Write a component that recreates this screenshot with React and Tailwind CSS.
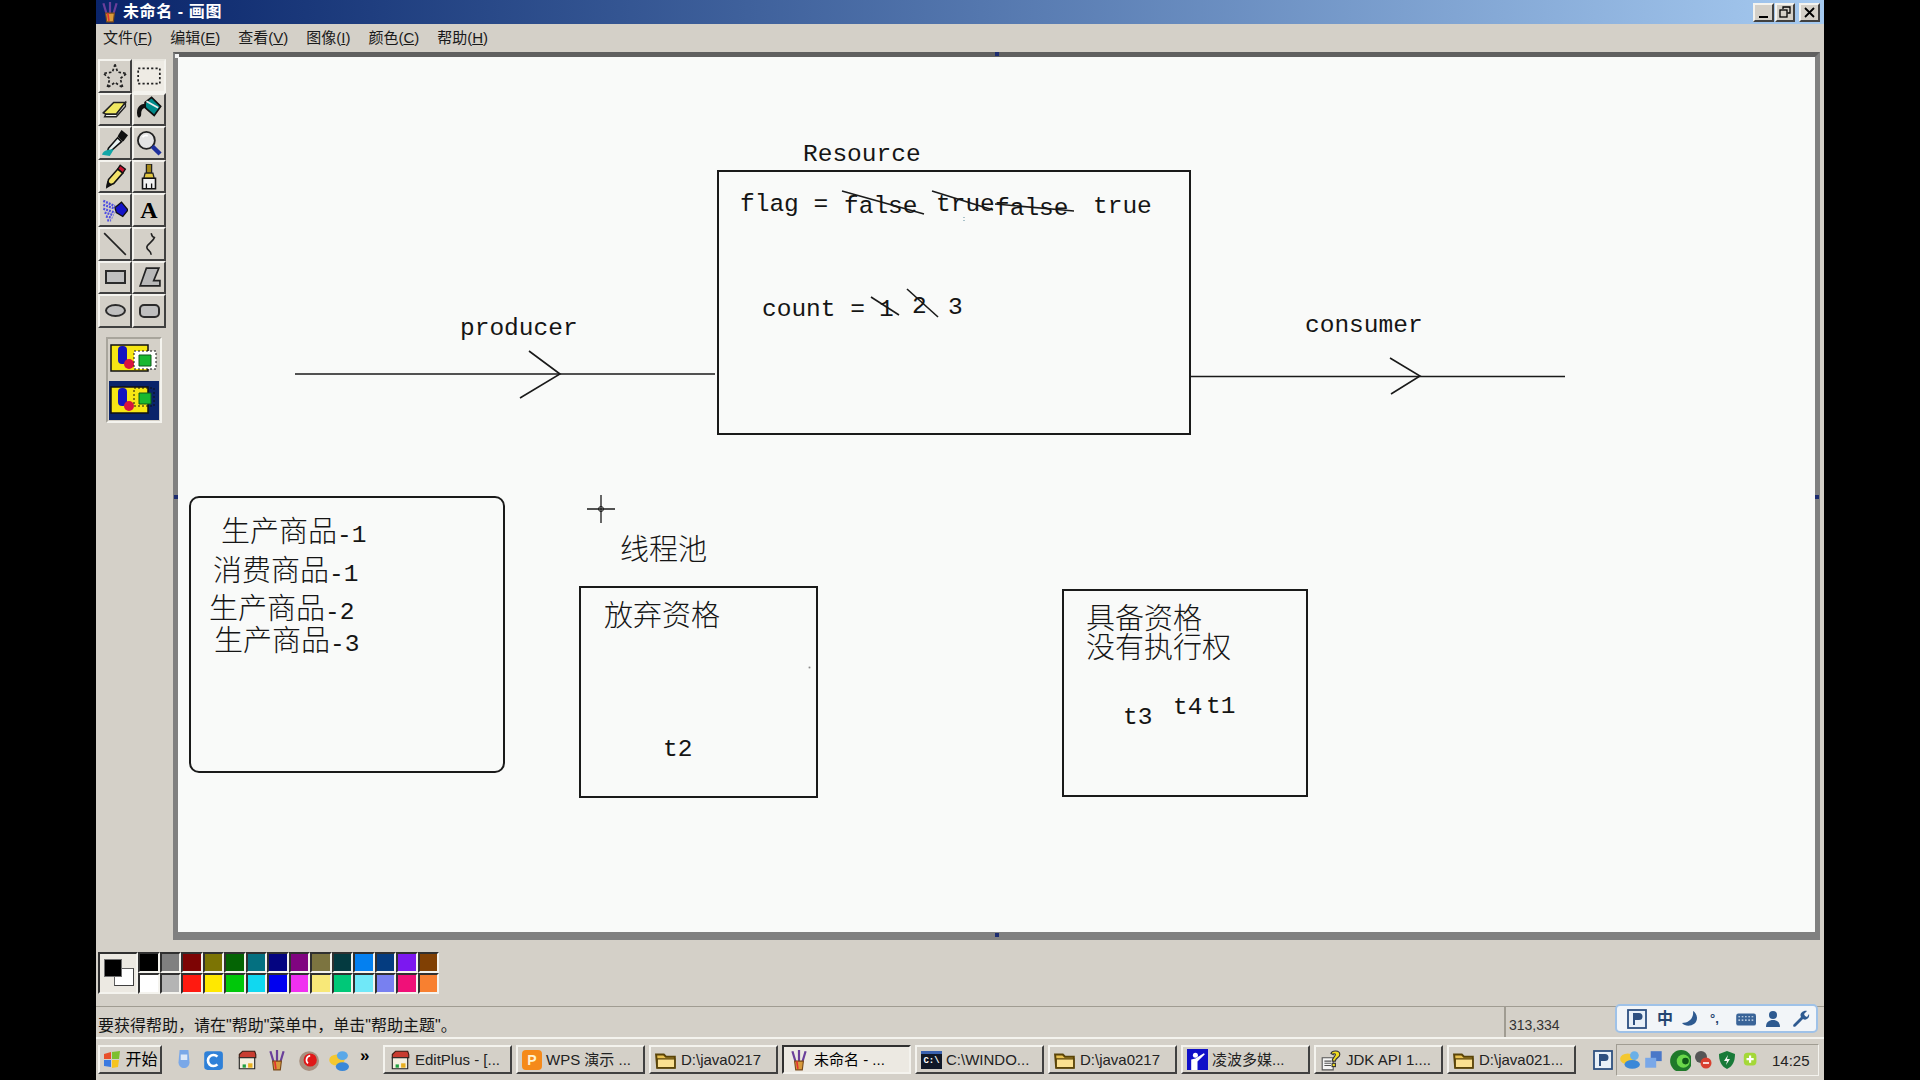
import React from "react";

const raised = "border-2 border-t-[#f4f3ee] border-l-[#f4f3ee] border-r-[#404040] border-b-[#404040]";
const sunken = "border-2 border-t-[#303030] border-l-[#303030] border-r-[#f4f3ee] border-b-[#f4f3ee]";
const ui = "font-['Liberation_Sans','Noto_Sans_CJK_SC',sans-serif]";
const mono = "font-['Liberation_Mono','Noto_Sans_CJK_SC',monospace]";
const latin = `absolute ${mono} text-[24.5px] leading-[28px] text-[#151515] whitespace-pre`;
const cjk = "absolute font-['Noto_Sans_CJK_SC',sans-serif] font-light text-[29px] leading-[26px] text-[#151515] whitespace-pre";
const digits = `${mono} text-[24.5px] leading-[20px]`;

const S = ({ children, size = 20, vb = "0 0 20 20", className = "" }) => (
  <svg width={size} height={size} viewBox={vb} className={className} fill="none">{children}</svg>
);
const T = ({ children }) => <S size={26}>{children}</S>;

const tools = [
  <T><path d="M10 1l2 6 7 1-5 4 2 7-6-4-6 4 2-7-5-4 7-1z" stroke="#222" strokeWidth="1.300" strokeDasharray="2 1.500" /></T>,
  <S size={26} vb="0 0 24 24"><rect x="2" y="5" width="20" height="14" stroke="#222" strokeWidth="1.600" strokeDasharray="2 2" /></S>,
  <T><path d="M1 13l8-8h9l-7 9H3z" fill="#f0e860" stroke="#222" strokeWidth="1.200" /><path d="M2 16l1-2h8l7-9v3l-7 8H3z" fill="#f4f4f4" stroke="#222" strokeWidth="1.100" /></T>,
  <T><path d="M7 5l5-4 7 7-5 7-7-6z" fill="#008a8a" stroke="#111" strokeWidth="1.300" /><path d="M8 4l9 5" stroke="#eee" strokeWidth="1.400" /><path d="M7 6C3 6 0 9 1 15c1 3 3 1 3-1 0-3 1-5 4-5" fill="#111" /></T>,
  <T><path d="M15 0l5 4-3 4-1 1-4-4 1-2z" fill="#111" /><path d="M12 6l3 3-8 7-3 1 1-3z" fill="#e8f2f2" stroke="#111" strokeWidth="1.200" /><path d="M0 19c1-4 6-4 9-4l-3 5z" fill="#12a6a6" /></T>,
  <T><circle cx="8" cy="8" r="6.500" fill="#e4e4e4" stroke="#222" strokeWidth="1.400" /><path d="M12.500 12.500l6 6" stroke="#1d2f9c" strokeWidth="3.400" /><path d="M5 5.500q2-2 4-1" stroke="#fff" strokeWidth="1.400" /></T>,
  <T><path d="M14 1l4 3-2 3-4-3z" fill="#c8102e" stroke="#111" /><path d="M12 4l4 3-7 8-5 2 1-5z" fill="#f3e36a" stroke="#111" strokeWidth="1.200" /><path d="M3 19l1-6 4 3z" fill="#111" /></T>,
  <T><path d="M8 0h4v7H8z" fill="#a68a18" stroke="#222" /><path d="M7 7h6l1 4H6z" fill="#e4c840" stroke="#222" /><path d="M5 11h10v8H5z" fill="#f2f2f2" stroke="#111" strokeWidth="1.200" /><path d="M8 15v4M12 15v4" stroke="#111" /></T>,
  <T><path d="M10 8l5-4 5 6-4 5-5-3z" fill="#1414c8" stroke="#111" /><path d="M1 3l9 4M1 6l9 3M1 9l9 3M2 12l7 2M3 15l5 1M4 18l3 0" stroke="#5050e0" strokeWidth="1.800" strokeDasharray="1.500 0.800" /></T>,
  <span className="font-['Liberation_Serif',serif] font-bold text-[24px] leading-none text-black">A</span>,
  <S size={26} vb="0 0 24 24"><path d="M2 2l20 20" stroke="#222" strokeWidth="1.500" /></S>,
  <S size={26} vb="0 0 24 24"><path d="M14 2c1 3 1 3 3 4-1 4-7 6-7 9 0 3 4 3 4 7" stroke="#222" strokeWidth="1.500" /></S>,
  <span className="block w-[21px] h-[14px] border-2 border-[#2b2b2b] bg-[#bfbfbf]" />,
  <S size={25} vb="0 0 24 24"><path d="M9 3h12l-5 12h6v5H3z" fill="#b8b8b8" stroke="#222" strokeWidth="1.600" /></S>,
  <span className="block w-[21px] h-[13px] rounded-[50%] border-2 border-[#2b2b2b] bg-[#bfbfbf]" />,
  <span className="block w-[21px] h-[14px] rounded-[5px] border-2 border-[#2b2b2b] bg-[#bfbfbf]" />,
];

const OpaqueIcon = () => (
  <svg width="48" height="30" viewBox="0 0 48 30" fill="none">
    <rect x="1" y="2" width="37" height="26" fill="#f6e614" stroke="#111" strokeWidth="1.500" />
    <rect x="8" y="3" width="9" height="18" rx="4" fill="#1414c0" />
    <circle cx="19" cy="21" r="5" fill="#d81440" />
    <rect x="24" y="8" width="22" height="18" fill="#fff" stroke="#111" strokeDasharray="2 2" />
    <path d="M29 12h12v11H29z" fill="#18b830" stroke="#0a5a18" />
  </svg>
);
const TransIcon = () => (
  <svg width="48" height="30" viewBox="0 0 48 30" fill="none">
    <rect x="1" y="2" width="37" height="26" fill="#f6e614" stroke="#111" strokeWidth="1.500" />
    <rect x="8" y="3" width="9" height="18" rx="4" fill="#1414c0" />
    <circle cx="19" cy="21" r="5" fill="#d81440" />
    <rect x="24" y="3" width="20" height="18" stroke="#111" strokeDasharray="2 2" />
    <path d="M29 8h12v11H29z" fill="#18b830" stroke="#0a5a18" />
  </svg>
);

const palette = [
  ["#000000", "#808080", "#7d0404", "#7c7404", "#046404", "#047080", "#040480", "#800480", "#7c7440", "#043a40", "#0480f0", "#043c80", "#7c18f0", "#804004"],
  ["#ffffff", "#b4b4b4", "#ff1a10", "#ffe800", "#00c80a", "#10d8f0", "#0000f0", "#f030f0", "#f8e878", "#00c878", "#70e8f8", "#7880f0", "#f01078", "#f88030"],
];

const PaintIcon = ({ size = 22 }) => (
  <S size={size}>
    <path d="M4 2l3 10M16 2l-3 10M10 1v11" stroke="#6a3f9a" strokeWidth="2" />
    <path d="M6 11h8l-1 8H7z" fill="#d89a3a" stroke="#7a4a1a" />
    <path d="M8 11l1 7" stroke="#e23030" strokeWidth="1.500" />
  </S>
);
const Folder = () => (
  <S size={22}>
    <path d="M1 5h7l2 2h8v10H2z" fill="#e8c050" stroke="#5a4408" strokeWidth="1.800" />
    <path d="M2 9h16v8H2z" fill="#fbe090" stroke="#5a4408" strokeWidth="1.300" />
  </S>
);
const EditPlus = () => (
  <S size={22}>
    <path d="M3 5l3-3h11l1 3v3H3z" fill="#c83c30" stroke="#3a1a10" />
    <path d="M3 8h14v10H3z" fill="#f4f0e0" stroke="#222" />
    <path d="M6 14h3v3H6z" fill="#20a040" />
    <path d="M11 13h4v4h-4z" fill="#e8b020" />
  </S>
);

const taskButtons = [
  { label: "EditPlus - [...", icon: <EditPlus /> },
  { label: "WPS 演示 ...", icon: <span className="flex w-[20px] h-[20px] shrink-0 items-center justify-center rounded-[4px] bg-[#f58a1a] text-[14px] font-bold leading-none text-[#fff2d0]">P</span> },
  { label: "D:\\java0217", icon: <Folder /> },
  { label: "未命名 - ...", icon: <PaintIcon />, active: true },
  { label: "C:\\WINDO...", icon: <span className="flex w-[21px] h-[18px] shrink-0 items-center justify-center bg-[#101828] border-t-[3px] border-[#3a62b0] font-['Liberation_Mono',monospace] text-[9px] font-bold leading-none text-white">C:\</span> },
  { label: "D:\\java0217", icon: <Folder /> },
  { label: "凌波多媒...", icon: (
    <S size={21}><rect x="0" y="0" width="20" height="20" fill="#1010c8" /><circle cx="8" cy="6" r="2.400" fill="#fff" /><path d="M4 20V10l4-1 8-5 1 1-7 7v8z" fill="#fff" /></S>
  ) },
  { label: "JDK API 1....", icon: (
    <S size={22}><path d="M2 8h10v11H2z" fill="#f4f4f4" stroke="#555" /><path d="M4 11h6M4 13h6M4 15h6" stroke="#555" /><path d="M10 4c1-3 8-3 8 1 0 3-4 3-4 6h-3c0-3 3-4 3-6 0-1-2-1-2 0z" fill="#f2dc20" stroke="#333" /><rect x="11" y="13" width="3" height="3" fill="#f2dc20" stroke="#333" /></S>
  ) },
  { label: "D:\\java021...", icon: <Folder /> },
];

const CanvasDrawing = () => (
  <div className="relative flex-1 bg-[#f9faf9] overflow-hidden">
    <div className="absolute left-[539px] top-[113px] w-[474px] h-[265px] border-2 border-[#1a1a1a]" />
    <div className="absolute left-[11px] top-[439px] w-[316px] h-[277px] rounded-[10px] border-2 border-[#1a1a1a]" />
    <div className="absolute left-[401px] top-[529px] w-[239px] h-[212px] border-2 border-[#1a1a1a]" />
    <div className="absolute left-[884px] top-[532px] w-[246px] h-[208px] border-2 border-[#1a1a1a]" />

    <svg className="absolute left-0 top-0" width="1637" height="875" viewBox="178 57 1637 875" fill="none" stroke="#1a1a1a" strokeWidth="1.600">
      <path d="M295 374H715" />
      <path d="M529 351L560 374L520 398" />
      <path d="M1190 376.500H1565" />
      <path d="M1390 358L1420 376L1391 394" />
      <path d="M842 191L924 214" />
      <path d="M932 191L993 210" />
      <path d="M995 204L1074 211" />
      <path d="M871 297L899 315" />
      <path d="M907 289L938 317" />
      <path d="M601 495V523M587 509H615" strokeWidth="1.300" />
      <circle cx="601" cy="509" r="2.500" strokeWidth="1" />
      <rect x="809" y="667" width="1" height="1" stroke="#666" strokeWidth="0.600" />
      <path d="M964 217v1M964 220v1" stroke="#5a8a9a" strokeWidth="1" />
    </svg>

    <span className={`${latin} left-[625px] top-[84px]`}>Resource</span>
    <span className={`${latin} left-[562px] top-[134px]`}>flag =</span>
    <span className={`${latin} left-[666px] top-[136px]`}>false</span>
    <span className={`${latin} left-[758px] top-[134px]`}>true</span>
    <span className={`${latin} left-[817px] top-[138px]`}>false</span>
    <span className={`${latin} left-[915px] top-[136px]`}>true</span>
    <span className={`${latin} left-[584px] top-[239px]`}>count =</span>
    <span className={`${latin} left-[701px] top-[239px]`}>1</span>
    <span className={`${latin} left-[734px] top-[236px]`}>2</span>
    <span className={`${latin} left-[770px] top-[237px]`}>3</span>
    <span className={`${latin} left-[282px] top-[258px]`}>producer</span>
    <span className={`${latin} left-[1127px] top-[255px]`}>consumer</span>

    <span className={`${cjk} left-[43px] top-[459px]`}>生产商品<span className={digits}>-1</span></span>
    <span className={`${cjk} left-[35px] top-[498px]`}>消费商品<span className={digits}>-1</span></span>
    <span className={`${cjk} left-[31px] top-[536px]`}>生产商品<span className={digits}>-2</span></span>
    <span className={`${cjk} left-[36px] top-[568px]`}>生产商品<span className={digits}>-3</span></span>
    <span className={`${cjk} left-[442px] top-[477px]`}>线程池</span>
    <span className={`${cjk} left-[426px] top-[543px]`}>放弃资格</span>
    <span className={`${latin} left-[485px] top-[679px]`}>t2</span>
    <span className={`${cjk} left-[908px] top-[546px]`}>具备资格</span>
    <span className={`${cjk} left-[908px] top-[575px]`}>没有执行权</span>
    <span className={`${latin} left-[945px] top-[647px]`}>t3</span>
    <span className={`${latin} left-[995px] top-[637px]`}>t4</span>
    <span className={`${latin} left-[1028px] top-[636px]`}>t1</span>
  </div>
);

const Handle = ({ className }) => <span className={`absolute w-[4px] h-[4px] bg-[#1c2c70] ${className}`} />;

export default function App() {
  return (
    <div className={`w-[1920px] h-[1080px] overflow-hidden bg-black pl-[96px] pr-[96px] ${ui}`}>
      <div className="flex flex-col h-full bg-[#d4d0c8]">
        {/* Title bar */}
        <div className="flex items-center h-[24px] shrink-0 pl-[3px] pr-[4px] bg-gradient-to-r from-[#0a246a] to-[#a6caf0]">
          <PaintIcon />
          <span className="ml-[2px] text-[16px] tracking-[0.6px] font-bold text-white leading-none">未命名 - 画图</span>
          <div className="ml-auto flex items-center gap-[1px]">
            <span className={`flex items-end justify-center w-[21px] h-[19px] pb-[2px] bg-[#d4d0c8] ${raised}`}><span className="block w-[9px] h-[2px] bg-black" /></span>
            <span className={`flex items-center justify-center w-[20px] h-[19px] mr-[3px] bg-[#d4d0c8] ${raised}`}>
              <svg width="12" height="12" viewBox="0 0 12 12" fill="none" stroke="#000" strokeWidth="1.300"><path d="M4 3V1h7v6H8.500" /><rect x="1" y="4" width="7" height="7" /></svg>
            </span>
            <span className={`flex items-center justify-center w-[21px] h-[19px] bg-[#d4d0c8] ${raised}`}>
              <svg width="11" height="11" viewBox="0 0 11 11" stroke="#000" strokeWidth="1.800"><path d="M1 1l9 9M10 1l-9 9" /></svg>
            </span>
          </div>
        </div>

        {/* Menu bar */}
        <div className="flex items-center h-[26px] shrink-0 gap-[18px] pl-[7px] text-[15px] leading-none text-[#1a1a1a]">
          <span>文件(<u>F</u>)</span>
          <span>编辑(<u>E</u>)</span>
          <span>查看(<u>V</u>)</span>
          <span>图像(<u>I</u>)</span>
          <span>颜色(<u>C</u>)</span>
          <span>帮助(<u>H</u>)</span>
        </div>

        {/* Main */}
        <div className="flex flex-1 min-h-0">
          <div className="flex flex-col w-[77px] shrink-0 pt-[9px] pl-[2px]">
            <div className="grid grid-cols-[34px_34px] auto-rows-[33.600px]">
              {tools.map((t, i) => (
                <div key={i} className={`flex items-center justify-center ${i === 1 ? `bg-[#eeebe4] ${sunken}` : raised} border-l-[#e8e6df] border-t-[#e8e6df]`}>
                  {t}
                </div>
              ))}
            </div>
            <div className={`flex flex-col items-center justify-center gap-[4px] w-[56px] h-[86px] mt-[9px] ml-[8px] border-2 border-t-[#a8a59c] border-l-[#a8a59c] border-r-[#f4f3ee] border-b-[#f4f3ee]`}>
              <div className="flex items-center justify-center w-[50px] h-[37px]"><OpaqueIcon /></div>
              <div className="flex items-center justify-center w-[50px] h-[39px] bg-[#0a246a]"><TransIcon /></div>
            </div>
          </div>
          <div className="relative flex flex-1 flex-col mt-[2px] mr-[4px] border-t-[5px] border-l-[5px] border-r-[5px] border-b-[8px] border-t-[#606060] border-l-[#808080] border-r-[#808080] border-b-[#808080]">
            <CanvasDrawing />
            <Handle className="left-[-3px] top-[-3px] bg-[#f4f4f4]" />
            <Handle className="left-[-4px] top-[438px]" />
            <Handle className="left-[817px] top-[-5px]" />
            <Handle className="right-[-4px] top-[438px]" />
            <Handle className="left-[817px] bottom-[-5px]" />
          </div>
        </div>

        {/* Colour box */}
        <div className="flex h-[66px] shrink-0 items-start pt-[12px] pl-[2px]">
          <div className={`relative w-[40px] h-[42px] shrink-0 bg-[#ece9e2] ${sunken}`}>
            <span className="absolute left-[14px] top-[14px] w-[20px] h-[18px] bg-white border border-t-[#606060] border-l-[#606060] border-r-[#404040] border-b-[#404040]" />
            <span className="absolute left-[4px] top-[5px] w-[18px] h-[18px] bg-black border border-[#707070]" />
          </div>
          <div className="grid grid-cols-[repeat(14,21.500px)] auto-rows-[21px]">
            {palette.flat().map((c, i) => (
              <span key={i} style={{ backgroundColor: c }} className={`block ${sunken}`} />
            ))}
          </div>
        </div>

        {/* Status bar */}
        <div className="flex h-[32px] shrink-0 border-t border-t-[#a09c92] border-b border-b-[#f4f3ee]">
          <div className="flex flex-1 items-center pl-[2px] pt-[7px] text-[16px] leading-none text-[#151515]">要获得帮助，请在"帮助"菜单中，单击"帮助主题"。</div>
          <div className="flex items-center w-[320px] shrink-0 pl-[3px] border-l-2 border-l-[#a09c92] text-[14px] leading-none text-[#333] pt-[6px]">313,334</div>
          <div className="absolute left-[1615px] top-[1004px] flex items-center h-[29px] w-[203px] pl-[10px] gap-[7px] rounded-[5px] border-2 border-[#9fc2e8] bg-[#f2f5f8] text-[#25456f]">
            <S size={20}><rect x="1" y="1" width="18" height="18" fill="#e8f0f8" stroke="#2e5080" strokeWidth="1.800" /><path d="M6 4h6a3.500 3.500 0 010 7H8v5H6z" fill="#2e5080" /></S>
            <span className="text-[16px] font-bold leading-none ml-[3px]">中</span>
            <S size={20}><path d="M13 2c1 7-4 12-11 12 4 5 15 3 15-5 0-3-2-6-4-7z" fill="#2e5a90" /></S>
            <span className="text-[13px] font-bold leading-none ml-[3px] w-[17px]">°,</span>
            <S size={22}><rect x="2" y="5" width="18" height="11" rx="2" fill="#3a6498" /><path d="M4 8h14M4 11h14" stroke="#dce8f4" strokeDasharray="1.500 1.500" /></S>
            <S size={20}><circle cx="10" cy="6" r="4" fill="#2e5a90" /><path d="M3 18c0-5 3-7 7-7s7 2 7 7z" fill="#2e5a90" /></S>
            <S size={20}><path d="M17 2l-3 3 1 2 2 1 2-3c1 4-3 7-6 5L6 17c-2 2-4 0-2-2l7-7c-2-3 2-7 6-6z" fill="#2e5a90" /></S>
          </div>
        </div>

        {/* Taskbar */}
        <div className="flex items-start h-[42px] shrink-0 pt-[6px] pl-[2px] border-t border-t-[#f4f3ee]">
          <div className={`flex items-center justify-center gap-[3px] w-[64px] h-[29px] shrink-0 text-[16px] leading-none text-black ${raised}`}>
            <svg width="20" height="20" viewBox="0 0 20 20"><path d="M2 4l7-2v7H2z" fill="#e8502a" /><path d="M10 2l8-1-1 8h-7z" fill="#7cc030" /><path d="M2 10h7v7l-7-1z" fill="#3a7ae0" /><path d="M10 10h7l-1 7-6 1z" fill="#f6c420" /></svg>
            开始
          </div>
          <div className="flex items-center w-[221px] h-[29px] shrink-0 pl-[11px] text-[0px]">
            <span className="w-[29px] shrink-0"><S size={22}><path d="M6 1h8l1 11c0 7-10 7-10 0z" fill="#7aa8e8" /><path d="M7 5h6v5H7z" fill="#dce8f8" /></S></span>
            <span className="w-[34px] shrink-0"><S size={22}><rect x="2" y="2" width="17" height="17" rx="3" fill="#2e80d8" /><path d="M14 7a5 5 0 100 7" stroke="#fff" strokeWidth="2.400" fill="none" /></S></span>
            <span className="w-[30px] shrink-0"><EditPlus /></span>
            <span className="w-[31px] shrink-0"><PaintIcon /></span>
            <span className="w-[30px] shrink-0"><S size={22}><circle cx="11" cy="11" r="9" fill="#a89080" /><circle cx="12" cy="10" r="6" fill="#e01818" /><path d="M12 6a4 4 0 00-2 7" stroke="#fff" strokeWidth="1.500" fill="none" /></S></span>
            <span className="w-[33px] shrink-0"><S size={22}><ellipse cx="9" cy="10" rx="7" ry="5" fill="#f4c830" /><ellipse cx="14" cy="6" rx="5" ry="4" fill="#5aa8e8" /><ellipse cx="14" cy="16" rx="6" ry="4" fill="#3a88d8" /></S></span>
            <span className="text-[17px] font-bold leading-none text-black mb-[8px]">»</span>
          </div>
          <div className="flex gap-[4px] shrink-0">
            {taskButtons.map((b, i) => (
              <div key={i} className={`flex items-center gap-[4px] w-[129px] h-[29px] pl-[4px] overflow-hidden whitespace-nowrap text-[15px] leading-none ${b.active ? `bg-[#ece9e2] text-black ${sunken}` : `text-[#222] ${raised}`}`}>
                {b.icon}
                <span>{b.label}</span>
              </div>
            ))}
          </div>
          <div className="flex items-center h-[29px] ml-[17px] shrink-0">
            <S size={20}><rect x="1" y="1" width="18" height="18" fill="#e8f0f8" stroke="#2e5080" strokeWidth="1.800" /><path d="M6 4h6a3.500 3.500 0 010 7H8v5H6z" fill="#2e5080" /></S>
          </div>
          <div className={`flex items-center h-[32px] w-[203px] ml-[3px] mt-[-1px] pl-[2px] shrink-0 border border-t-[#a09c92] border-l-[#a09c92] border-r-[#f4f3ee] border-b-[#f4f3ee]`}>
            <span className="w-[24px]"><S size={22}><ellipse cx="8" cy="9" rx="7" ry="5" fill="#f4c830" /><ellipse cx="12" cy="14" rx="7" ry="4" fill="#3a88d8" /><circle cx="14" cy="6" r="4" fill="#6ab0e8" /></S></span>
            <span className="w-[26px]"><S size={22}><rect x="7" y="2" width="10" height="9" fill="#4a78c8" /><rect x="2" y="8" width="10" height="9" fill="#7aa8e8" /></S></span>
            <span className="w-[24px]"><S size={22}><circle cx="11" cy="11" r="10" fill="#1f7a2a" /><circle cx="13" cy="11" r="6" fill="#6ad84a" /><circle cx="15" cy="11" r="3" fill="#0e5a18" /></S></span>
            <span className="w-[24px]"><S><circle cx="8" cy="7" r="6" fill="#555" /><circle cx="13" cy="13" r="5.500" fill="#d84030" /><path d="M10 13h6" stroke="#fff" strokeWidth="1.600" /></S></span>
            <span className="w-[25px]"><S><path d="M10 1l8 3c0 7-2 12-8 15-6-3-8-8-8-15z" fill="#187a38" /><path d="M11 5l-4 6h3l-1 4 4-6h-3z" fill="#f4f4f4" /></S></span>
            <span className="w-[23px]"><S size={18}><rect x="2" y="2" width="14" height="14" rx="4" fill="#a4d838" /><path d="M9 5v8M5 9h8" stroke="#fff" strokeWidth="2.400" /></S></span>
            <span className="text-[15px] leading-none text-[#222] ml-[7px]">14:25</span>
          </div>
        </div>
      </div>
    </div>
  );
}
